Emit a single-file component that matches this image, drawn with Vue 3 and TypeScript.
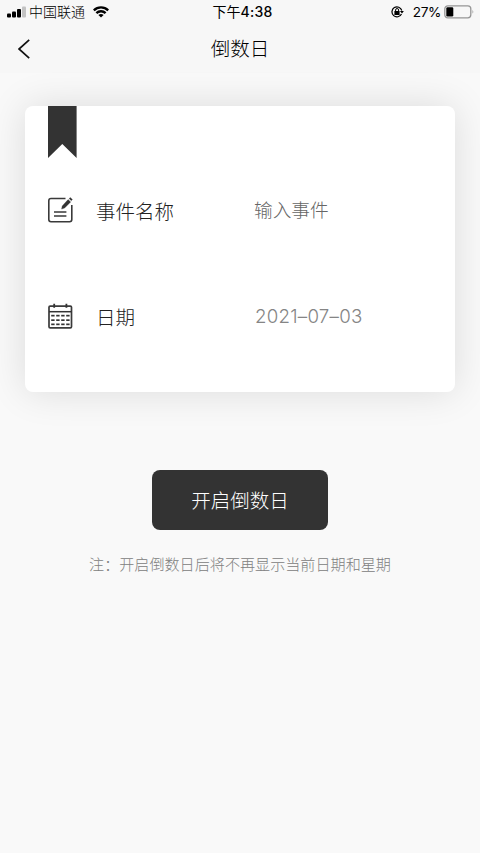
<script setup lang="ts">
import { ref } from 'vue'

const eventName = ref('')
const date = ref('2021–07–03')
const dashRows = [13, 17.5, 21.7]
const dashCols = [4, 9, 14, 19]
</script>

<template>
  <div class="page">
    <header class="top">
      <div class="status">
        <div class="status-left">
          <svg class="signal" width="19" height="12" viewBox="0 0 19 12">
            <rect x="0" y="7.5" width="4" height="4" rx="1" />
            <rect x="5" y="5.5" width="4" height="6" rx="1" />
            <rect x="10" y="3" width="4" height="8.5" rx="1" />
            <rect x="15" y="0.5" width="4" height="11" rx="1" fill="#c3c3c3" />
          </svg>
          <span class="carrier">中国联通</span>
          <svg class="wifi" width="16" height="12" viewBox="0 0 16 12">
            <path d="M.8 4.3a10.4 10.4 0 0 1 14.4 0M3.4 7.1a6.6 6.6 0 0 1 9.2 0" fill="none" stroke="#000" stroke-width="2.4" />
            <path d="M5.4 9a4 4 0 0 1 5.2 0L8 11.6z" />
          </svg>
        </div>
        <div class="clock"><span class="period">下午</span><span class="hour">4:38</span></div>
        <div class="status-right">
          <svg class="lock" width="13" height="12" viewBox="0 0 13 12">
            <path d="M10.5 8A5 5 0 1 1 10.8 4.5" fill="none" stroke="#000" stroke-width="1.2" />
            <path d="M8.9 4.9h4L11 7.6z" />
            <rect x="3.4" y="5" width="5.2" height="4" rx="0.5" />
            <path d="M4.6 5.3V4a1.5 1.5 0 0 1 3 0v1.3" fill="none" stroke="#000" />
          </svg>
          <span class="percent">27%</span>
          <svg class="battery" width="30" height="14" viewBox="0 0 30 14">
            <rect x="0.8" y="0.8" width="26" height="12" rx="3" fill="none" stroke="#969696" stroke-width="1.3" />
            <rect x="2.3" y="2.2" width="7" height="9.2" rx="1.2" />
            <path d="M28.5 4.8q1.5 2 0 4z" fill="#969696" />
          </svg>
        </div>
      </div>
      <div class="nav">
        <svg class="back" width="12" height="20" viewBox="0 0 12 20">
          <path d="M11.2 .8L1 10l10.2 9.2" fill="none" stroke="#111" stroke-width="1.7" />
        </svg>
        <h1>倒数日</h1>
        <span></span>
      </div>
    </header>

    <main>
      <section class="card">
        <svg class="ribbon" width="29" height="52" viewBox="0 0 29 52">
          <path d="M0 0h28.6v52L14.3 38 0 52z" fill="#333" />
        </svg>
        <div class="row event">
          <svg width="25" height="26" viewBox="0 0 25 26" fill="none" stroke="#3a3a3a">
            <path d="M17.5 1.5H3Q.8 1.5.8 3.7V22.5Q.8 24.7 3 24.7H21.6Q23.8 24.7 23.8 22.5V8" stroke-width="1.6" />
            <path d="M6 15h12.4M6 19h12.4" stroke-width="1.5" />
            <path d="M20.1 2.6l2.6 2.3-6.1 6.2-3 1 .6-3.2zM21.1 1.6l1.2-1.1 2.1 1.9-1.1 1.3z" fill="#333" stroke="#333" stroke-width=".3" />
          </svg>
          <span class="label">事件名称</span>
          <input v-model="eventName" placeholder="输入事件" />
        </div>
        <div class="row day">
          <svg width="25" height="26" viewBox="0 0 25 26">
            <rect x="1" y="3.1" width="22.5" height="21.8" rx="1.2" fill="none" stroke="#3a3a3a" stroke-width="1.7" />
            <path d="M6.2 .7v4M18.4 .7v4" stroke="#333" stroke-width="1.8" />
            <path d="M1 8.7h22.5" stroke="#333" stroke-width="1.5" />
            <template v-for="y in dashRows" :key="y">
              <rect v-for="x in dashCols" :key="x" :x="x - .8" :y="y - 1.2" width="3.4" height="1.7" fill="#333" />
            </template>
          </svg>
          <span class="label">日期</span>
          <span class="date">{{ date }}</span>
        </div>
      </section>
      <button type="button">开启倒数日</button>
      <p class="note">注：开启倒数日后将不再显示当前日期和星期</p>
    </main>
  </div>
</template>

<style>
body { background: #f9f9f9; }
</style>

<style scoped>
.page {
  box-sizing: border-box;
  min-height: 853px;
  background: #f9f9f9;
  color: #333;
  font-family: Inter, "Noto Sans CJK SC", sans-serif;
  font-weight: 300;
}
.top { height: 73px; background: #f7f7f7; color: #000; }
.status {
  display: grid;
  grid-template-columns: 1fr auto 1fr;
  align-items: center;
  height: 24px;
  padding: 0 6px 0 7px;
}
.status-left, .status-right, .clock { display: flex; align-items: center; line-height: 24px; }
.status-right { justify-content: flex-end; }
.carrier { margin-left: 3px; font-size: 14px; font-weight: 300; }
.wifi { margin-left: 8px; }
.clock { padding-left: 4px; font-size: 14px; font-weight: 400; }
.hour { font-size: 14px; font-weight: 500; letter-spacing: .2px; }
.percent { margin: 0 3px 0 9px; font-size: 13.6px; font-weight: 400; letter-spacing: -.4px; }
.nav {
  display: grid;
  grid-template-columns: 1fr auto 1fr;
  align-items: center;
  height: 49px;
  padding: 0 18px;
}
h1 { margin: 1px 0 0; font-size: 19.5px; font-weight: 300; line-height: 48px; }
main { display: flex; flex-direction: column; align-items: center; padding: 33px 25px 0; }
.card {
  box-sizing: border-box;
  width: 430px;
  height: 286px;
  padding-left: 23px;
  border-radius: 8px;
  background: #fff;
  box-shadow: 0 0 38px rgba(0, 0, 0, .12);
}
.ribbon { display: block; }
.row {
  display: grid;
  grid-template-columns: 48px 158px 1fr;
  align-items: center;
  height: 30px;
}
.event { margin-top: 37px; }
.day { margin-top: 76px; }
.label { padding-top: 5px; color: #222; font-size: 19.5px; line-height: 25px; }
input {
  width: 180px;
  padding: 1px 0 0;
  border: 0;
  outline: 0;
  background: transparent;
  color: #777;
  font: inherit;
  font-size: 18.7px;
  line-height: 28px;
}
input::placeholder { color: #666; opacity: 1; }
.date { padding-left: 1px; color: #858585; font-size: 18.7px; letter-spacing: .25px; }
button {
  width: 176px;
  height: 60px;
  margin-top: 78px;
  padding: 0 0 2px;
  border: 0;
  border-radius: 8px;
  background: #333;
  color: #fff;
  font: inherit;
  font-size: 19.5px;
}
.note { margin: 23px 0 0; color: #808080; font-size: 15.1px; line-height: 24px; white-space: nowrap; }
</style>
